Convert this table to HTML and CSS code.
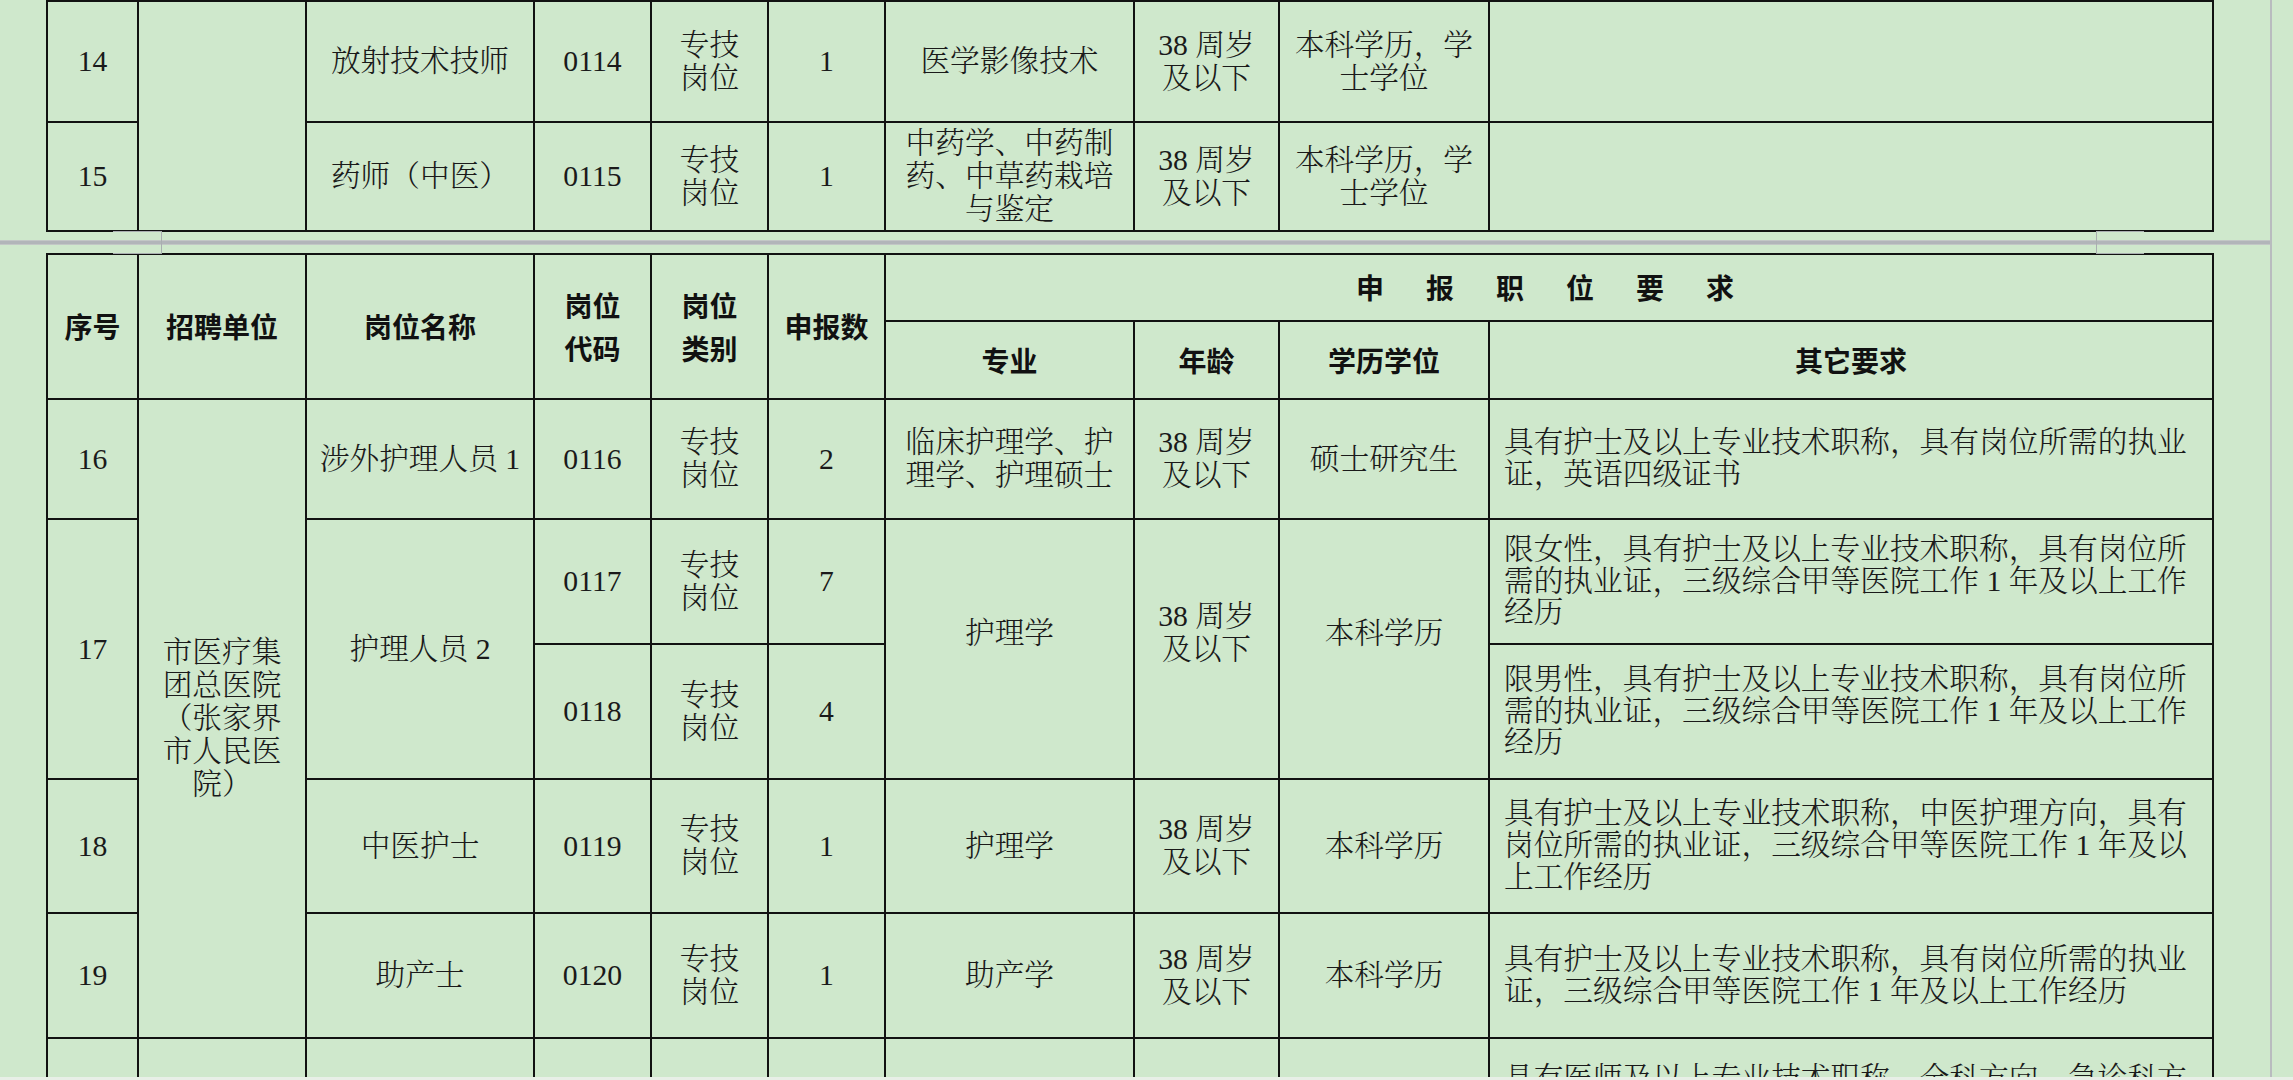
FILE: index.html
```html
<!DOCTYPE html>
<html lang="zh-CN">
<head>
<meta charset="utf-8">
<title>岗位表</title>
<link rel="stylesheet" href="styles.css">
</head>
<body>
<div class="screen">
  <div class="sheet">
    <table class="grid grid-top">
      <colgroup>
        <col class="c-no"><col class="c-unit"><col class="c-name"><col class="c-code"><col class="c-type"><col class="c-count"><col class="c-major"><col class="c-age"><col class="c-edu"><col class="c-req">
      </colgroup>
      <tr class="r14">
        <td class="num">14</td>
        <td rowspan="2"></td>
        <td>放射技术技师</td>
        <td class="num">0114</td>
        <td>专技<br>岗位</td>
        <td class="num">1</td>
        <td>医学影像技术</td>
        <td>38 周岁<br>及以下</td>
        <td>本科学历，学<br>士学位</td>
        <td></td>
      </tr>
      <tr class="r15">
        <td class="num">15</td>
        <td>药师（中医）</td>
        <td class="num">0115</td>
        <td>专技<br>岗位</td>
        <td class="num">1</td>
        <td>中药学、中药制<br>药、中草药栽培<br>与鉴定</td>
        <td>38 周岁<br>及以下</td>
        <td>本科学历，学<br>士学位</td>
        <td></td>
      </tr>
    </table>

    <div class="page-break">
      <span class="crop crop-left"></span>
      <span class="crop crop-right"></span>
    </div>

    <table class="grid grid-main">
      <colgroup>
        <col class="c-no"><col class="c-unit"><col class="c-name"><col class="c-code"><col class="c-type"><col class="c-count"><col class="c-major"><col class="c-age"><col class="c-edu"><col class="c-req">
      </colgroup>
      <tr class="h1">
        <th rowspan="2">序号</th>
        <th rowspan="2">招聘单位</th>
        <th rowspan="2">岗位名称</th>
        <th rowspan="2">岗位<br>代码</th>
        <th rowspan="2">岗位<br>类别</th>
        <th rowspan="2">申报数</th>
        <th colspan="4" class="spaced">申报职位要求</th>
      </tr>
      <tr class="h2">
        <th>专业</th>
        <th>年龄</th>
        <th>学历学位</th>
        <th>其它要求</th>
      </tr>
      <tr class="r16">
        <td class="num">16</td>
        <td rowspan="5" class="unit">市医疗集<br>团总医院<br>（张家界<br>市人民医<br>院）</td>
        <td>涉外护理人员 1</td>
        <td class="num">0116</td>
        <td>专技<br>岗位</td>
        <td class="num">2</td>
        <td>临床护理学、护<br>理学、护理硕士</td>
        <td>38 周岁<br>及以下</td>
        <td>硕士研究生</td>
        <td class="req">具有护士及以上专业技术职称，具有岗位所需的执业<br>证，英语四级证书</td>
      </tr>
      <tr class="r17a">
        <td rowspan="2" class="num">17</td>
        <td rowspan="2">护理人员 2</td>
        <td class="num">0117</td>
        <td>专技<br>岗位</td>
        <td class="num">7</td>
        <td rowspan="2" class="raised">护理学</td>
        <td rowspan="2" class="raised">38 周岁<br>及以下</td>
        <td rowspan="2" class="raised">本科学历</td>
        <td class="req">限女性，具有护士及以上专业技术职称，具有岗位所<br>需的执业证，三级综合甲等医院工作 1 年及以上工作<br>经历</td>
      </tr>
      <tr class="r17b">
        <td class="num">0118</td>
        <td>专技<br>岗位</td>
        <td class="num">4</td>
        <td class="req">限男性，具有护士及以上专业技术职称，具有岗位所<br>需的执业证，三级综合甲等医院工作 1 年及以上工作<br>经历</td>
      </tr>
      <tr class="r18">
        <td class="num">18</td>
        <td>中医护士</td>
        <td class="num">0119</td>
        <td>专技<br>岗位</td>
        <td class="num">1</td>
        <td>护理学</td>
        <td>38 周岁<br>及以下</td>
        <td>本科学历</td>
        <td class="req">具有护士及以上专业技术职称，中医护理方向，具有<br>岗位所需的执业证，三级综合甲等医院工作 1 年及以<br>上工作经历</td>
      </tr>
      <tr class="r19">
        <td class="num">19</td>
        <td>助产士</td>
        <td class="num">0120</td>
        <td>专技<br>岗位</td>
        <td class="num">1</td>
        <td>助产学</td>
        <td>38 周岁<br>及以下</td>
        <td>本科学历</td>
        <td class="req">具有护士及以上专业技术职称，具有岗位所需的执业<br>证，三级综合甲等医院工作 1 年及以上工作经历</td>
      </tr>
      <tr class="r20">
        <td class="num">20</td>
        <td></td>
        <td>急诊科医师</td>
        <td class="num">0121</td>
        <td>专技<br>岗位</td>
        <td class="num">1</td>
        <td>临床医学</td>
        <td>40 周岁<br>及以下</td>
        <td>本科学历，学<br>士学位</td>
        <td class="req">具有医师及以上专业技术职称，全科方向，急诊科方<br>向，三级综合甲等医院工作 1 年及以上工作经历<br>优先</td>
      </tr>
    </table>
  </div>
  <div class="margin-right"></div>
</div>
<div class="bottom-edge"></div>
</body>
</html>
```

FILE: styles.css
```css
html, body {
  margin: 0;
  padding: 0;
}

body {
  background: #cfe8cc;
  overflow: hidden;
  font-family: "Liberation Serif", "Noto Serif CJK SC", "Noto Sans CJK SC", serif;
  color: #1a1a1a;
}

.screen {
  display: flex;
  height: 1080px;
  overflow: hidden;
}

.sheet {
  flex: none;
  width: 2272px;
  box-sizing: border-box;
  padding-left: 46px;
  border-right: 2px solid #b9bcbf;
}

.margin-right {
  flex: 1;
}

.grid {
  border-collapse: collapse;
  table-layout: fixed;
  width: 2166px;
  background: #cfe8cc;
}

.c-no { width: 91px; }
.c-unit { width: 168px; }
.c-name { width: 228px; }
.c-code { width: 117px; }
.c-type { width: 117px; }
.c-count { width: 117px; }
.c-major { width: 249px; }
.c-age { width: 145px; }
.c-edu { width: 210px; }
.c-req { width: 724px; }

.grid td,
.grid th {
  border: 2px solid #121212;
  padding: 0 4px;
  text-align: center;
  vertical-align: middle;
  font-size: 29.7px;
  line-height: 33px;
  font-weight: 300;
  white-space: nowrap;
}

.grid th {
  font-family: "Noto Sans CJK SC", sans-serif;
  font-weight: 700;
  font-size: 28px;
  line-height: 43px;
  color: #111;
}

.grid .spaced {
  letter-spacing: 42px;
  padding-left: 38px;
}

.grid .req {
  text-align: left;
  padding-left: 14px;
  line-height: 31.7px;
}

.grid .raised {
  padding-bottom: 32px;
}

.grid .unit {
  line-height: 33px;
}

.r14 { height: 121px; }
.r15 { height: 109px; }

.h1 { height: 67px; }
.h2 { height: 78px; }
.r16 { height: 120px; }
.r17a { height: 125px; }
.r17b { height: 135px; }
.r18 { height: 134px; }
.r19 { height: 125px; }
.r20 { height: 146px; }

.page-break {
  position: relative;
  height: 3px;
  margin: 9px 0 9px -46px;
  background: #b2b5b9;
  box-shadow: 0 -1px 0 #c3c7c6, 0 1px 0 #c3c7c6;
}

.crop {
  position: absolute;
  top: -10px;
  height: 21px;
  border-top: 1px solid #a9aeb0;
  border-bottom: 1px solid #a9aeb0;
}

.crop-left {
  left: 113px;
  width: 48px;
  border-right: 1px solid #a9aeb0;
}

.crop-right {
  left: 2096px;
  width: 47px;
  border-left: 1px solid #a9aeb0;
}

.bottom-edge {
  position: fixed;
  left: 0;
  right: 0;
  bottom: 0;
  height: 3px;
  background: #e8efe7;
}
```
